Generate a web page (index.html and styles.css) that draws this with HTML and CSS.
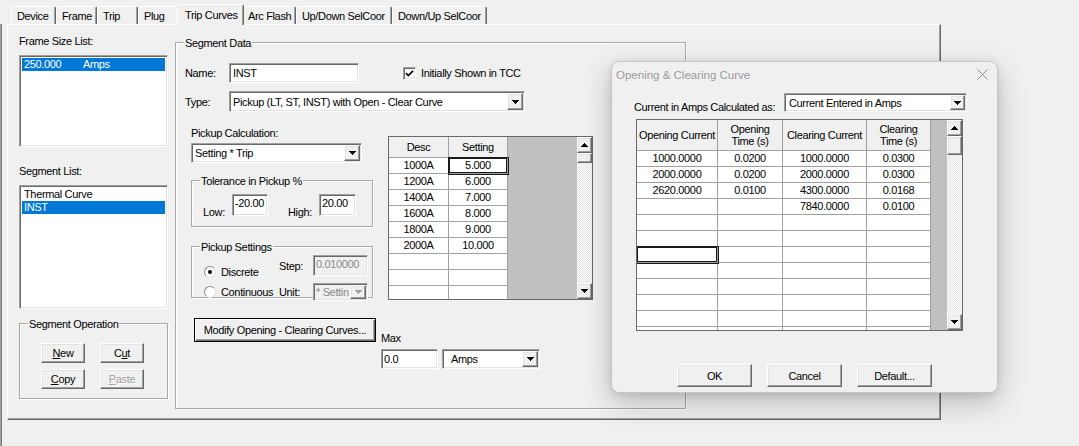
FILE: index.html
```html
<!DOCTYPE html>
<html>
<head>
<meta charset="utf-8">
<link rel="stylesheet" href="styles.css">
</head>
<body>
<div class="tabs">
  <div class="tab t-device">Device</div>
  <div class="tab t-frame">Frame</div>
  <div class="tab t-trip">Trip</div>
  <div class="tab t-plug">Plug</div>
  <div class="tab active t-curves">Trip Curves</div>
  <div class="tab t-arc">Arc Flash</div>
  <div class="tab t-ud">Up/Down SelCoor</div>
  <div class="tab t-du">Down/Up SelCoor</div>
</div>
<div class="frame">
  <div class="page">
    <div class="left-col">
      <div class="frame-lbl">Frame Size List:</div>
      <div class="sunken listbox lb1">
        <div class="li sel"><span class="amt">250.000</span><span>Amps</span></div>
      </div>
      <div class="seg-lbl">Segment List:</div>
      <div class="sunken listbox lb2">
        <div class="li">Thermal Curve</div>
        <div class="li sel">INST</div>
      </div>
      <div class="group segop">
        <span class="gtitle">Segment Operation</span>
        <div class="opgrid">
          <div class="btn"><u>N</u>ew</div>
          <div class="btn">C<u>u</u>t</div>
          <div class="btn"><u>C</u>opy</div>
          <div class="btn disabled"><u>P</u>aste</div>
        </div>
      </div>
    </div>

    <div class="group segdata">
      <span class="gtitle">Segment Data</span>
      <div class="name-row">
        <span class="flbl">Name:</span>
        <div class="sunken edit name-edit">INST</div>
        <div class="sunken chk">
          <svg width="11" height="11" viewBox="0 0 11 11"><path d="M2 5.2 L4.3 7.6 L9 2.8" fill="none" stroke="#000" stroke-width="1.7"/></svg>
        </div>
        <span class="chk-lbl">Initially Shown in TCC</span>
      </div>
      <div class="type-row">
        <span class="flbl">Type:</span>
        <div class="sunken select type-sel">
          <span class="val">Pickup (LT, ST, INST) with Open - Clear Curve</span>
          <span class="raised dd"><svg width="7" height="4" viewBox="0 0 7 4"><path d="M0 0h7v1h-1v1h-1v1h-1v1h-1v-1h-1v-1h-1v-1h-1z"/></svg></span>
        </div>
      </div>
      <div class="mid">
        <div class="pcol">
          <div class="plbl">Pickup Calculation:</div>
          <div class="sunken select calc-sel">
            <span class="val">Setting * Trip</span>
            <span class="raised dd"><svg width="7" height="4" viewBox="0 0 7 4"><path d="M0 0h7v1h-1v1h-1v1h-1v1h-1v-1h-1v-1h-1v-1h-1z"/></svg></span>
          </div>
          <div class="group tol">
            <span class="gtitle">Tolerance in Pickup %</span>
            <span class="tlbl low-lbl">Low:</span>
            <div class="sunken edit tedit low-edit">-20.00</div>
            <span class="tlbl high-lbl">High:</span>
            <div class="sunken edit tedit high-edit">20.00</div>
          </div>
          <div class="group psets">
            <span class="gtitle">Pickup Settings</span>
            <div class="pgrid">
              <div class="rcell r1"><span class="radio on"></span>Discrete</div>
              <span class="slbl">Step:</span>
              <div class="sunken edit dis step-edit">0.010000</div>
              <div class="rcell r2"><span class="radio"></span>Continuous</div>
              <span class="slbl">Unit:</span>
              <div class="sunken select dis unit-sel">
                <span class="val">* Settin</span>
                <span class="raised dd"><svg width="7" height="4" viewBox="0 0 7 4"><path fill="#a0a0a0" d="M0 0h7v1h-1v1h-1v1h-1v1h-1v-1h-1v-1h-1v-1h-1z"/></svg></span>
              </div>
            </div>
          </div>
        </div>

        <div class="dgrid ptable">
          <div class="cells pcells">
            <div class="h">Desc</div><div class="h">Setting</div>
            <div class="c">1000A</div><div class="c sel">5.000</div>
            <div class="c">1200A</div><div class="c">6.000</div>
            <div class="c">1400A</div><div class="c">7.000</div>
            <div class="c">1600A</div><div class="c">8.000</div>
            <div class="c">1800A</div><div class="c">9.000</div>
            <div class="c">2000A</div><div class="c">10.000</div>
            <div class="c"></div><div class="c"></div>
            <div class="c"></div><div class="c"></div>
            <div class="c"></div><div class="c"></div>
          </div>
          <div class="filler"></div>
          <div class="vscroll">
            <div class="raised sbb"><svg width="7" height="4" viewBox="0 0 7 4"><path d="M3 0h1v1h1v1h1v1h1v1h-7v-1h1v-1h1v-1h1z"/></svg></div>
            <div class="raised thumb"></div>
            <div class="track"></div>
            <div class="raised sbb"><svg width="7" height="4" viewBox="0 0 7 4"><path d="M0 0h7v1h-1v1h-1v1h-1v1h-1v-1h-1v-1h-1v-1h-1z"/></svg></div>
          </div>
        </div>
      </div>

      <div class="bottom">
        <div class="btn def modify">Modify Opening - Clearing Curves...</div>
        <div class="maxcol">
          <div class="maxlbl">Max</div>
          <div class="maxrow">
            <div class="sunken edit max-edit">0.0</div>
            <div class="sunken select amps-sel">
              <span class="val">Amps</span>
              <span class="raised dd"><svg width="7" height="4" viewBox="0 0 7 4"><path d="M0 0h7v1h-1v1h-1v1h-1v1h-1v-1h-1v-1h-1v-1h-1z"/></svg></span>
            </div>
          </div>
        </div>
      </div>
    </div>
  </div>
</div>

<div class="dialog">
  <div class="dlg-title">
    <span>Opening &amp; Clearing Curve</span>
    <svg class="xclose" width="11" height="11" viewBox="0 0 11 11"><path d="M0.5 0.5 L10.5 10.5 M10.5 0.5 L0.5 10.5" stroke="#8a8a8a" stroke-width="1"/></svg>
  </div>
  <div class="dlg-row">
    <span class="dlg-lbl">Current in Amps Calculated as:</span>
    <div class="sunken select dlg-sel">
      <span class="val">Current Entered in Amps</span>
      <span class="raised dd"><svg width="7" height="4" viewBox="0 0 7 4"><path d="M0 0h7v1h-1v1h-1v1h-1v1h-1v-1h-1v-1h-1v-1h-1z"/></svg></span>
    </div>
  </div>
  <div class="dgrid dtable">
    <div class="cells dcells">
      <div class="h">Opening Current</div><div class="h">Opening<br>Time (s)</div><div class="h">Clearing Current</div><div class="h">Clearing<br>Time (s)</div>
      <div class="c">1000.0000</div><div class="c">0.0200</div><div class="c">1000.0000</div><div class="c">0.0300</div>
      <div class="c">2000.0000</div><div class="c">0.0200</div><div class="c">2000.0000</div><div class="c">0.0300</div>
      <div class="c">2620.0000</div><div class="c">0.0100</div><div class="c">4300.0000</div><div class="c">0.0168</div>
      <div class="c"></div><div class="c"></div><div class="c">7840.0000</div><div class="c">0.0100</div>
      <div class="c"></div><div class="c"></div><div class="c"></div><div class="c"></div>
      <div class="c"></div><div class="c"></div><div class="c"></div><div class="c"></div>
      <div class="c sel"></div><div class="c"></div><div class="c"></div><div class="c"></div>
      <div class="c"></div><div class="c"></div><div class="c"></div><div class="c"></div>
      <div class="c"></div><div class="c"></div><div class="c"></div><div class="c"></div>
      <div class="c"></div><div class="c"></div><div class="c"></div><div class="c"></div>
      <div class="c"></div><div class="c"></div><div class="c"></div><div class="c"></div>
      <div class="c"></div><div class="c"></div><div class="c"></div><div class="c"></div>
    </div>
    <div class="filler"></div>
    <div class="vscroll">
      <div class="raised sbb"><svg width="7" height="4" viewBox="0 0 7 4"><path d="M3 0h1v1h1v1h1v1h1v1h-7v-1h1v-1h1v-1h1z"/></svg></div>
      <div class="raised thumb dthumb"></div>
      <div class="track"></div>
      <div class="raised sbb"><svg width="7" height="4" viewBox="0 0 7 4"><path d="M0 0h7v1h-1v1h-1v1h-1v1h-1v-1h-1v-1h-1v-1h-1z"/></svg></div>
    </div>
  </div>
  <div class="dlg-btns">
    <div class="btn dbtn">OK</div>
    <div class="btn dbtn">Cancel</div>
    <div class="btn dbtn">Default...</div>
  </div>
</div>
</body>
</html>
```

FILE: styles.css
```css
* { box-sizing: border-box; }

body {
  margin: 0;
  width: 1079px;
  height: 446px;
  overflow: hidden;
  position: relative;
  background: #f0f0f0;
  color: #000;
  font-family: "Liberation Sans", Arial, sans-serif;
  font-size: 11px;
  letter-spacing: -0.35px;
  line-height: 14px;
}

/* ---------- tabs ---------- */
.tabs {
  display: flex;
  align-items: flex-end;
  height: 24px;
  padding-left: 11px;
}
.tab {
  height: 18px;
  padding-left: 5px;
  display: flex;
  align-items: center;
  white-space: nowrap;
  border-top: 1px solid #fff;
  border-left: 1px solid #fff;
  border-right: 1px solid #696969;
  box-shadow: inset -1px 0 0 #a0a0a0;
  border-radius: 2px 2px 0 0;
}
.tab.active {
  height: 21px;
  margin: 0 -2px -1px;
  padding-left: 7px;
  padding-bottom: 1px;
  position: relative;
  z-index: 2;
  background: #f0f0f0;
}
.t-device { width: 45px; }
.t-frame, .t-trip, .t-plug { width: 41px; }
.t-curves { width: 67px; }
.t-arc { width: 54px; }
.t-ud { width: 96px; }
.t-du { width: 95px; }

/* ---------- frame / page ---------- */
.frame {
  height: 422px;
  border-left: 1px solid #a0a0a0;
  box-shadow: inset 1px 0 0 #7a7a7a;
}
.page {
  margin-left: 6px;
  width: 934px;
  height: 396px;
  display: flex;
  align-items: flex-start;
  padding-left: 11px;
  border-top: 1px solid #fff;
  border-left: 1px solid #fff;
  border-right: 1px solid #696969;
  border-bottom: 1px solid #696969;
  box-shadow: inset -1px -1px 0 #a0a0a0;
}

/* ---------- common widgets ---------- */
.sunken {
  border: 1px solid;
  border-color: #a0a0a0 #fff #fff #a0a0a0;
  box-shadow: inset 1px 1px 0 #696969, inset -1px -1px 0 #e3e3e3;
  background: #fff;
}
.raised {
  background: #f0f0f0;
  border: 1px solid;
  border-color: #fff #696969 #696969 #fff;
  box-shadow: inset -1px -1px 0 #a0a0a0, inset 1px 1px 0 #e3e3e3;
}
.btn {
  background: #f0f0f0;
  border: 1px solid;
  border-color: #fff #696969 #696969 #fff;
  box-shadow: inset -1px -1px 0 #a0a0a0, inset 1px 1px 0 #e3e3e3;
  display: flex;
  align-items: center;
  justify-content: center;
  white-space: nowrap;
}
.btn.disabled {
  color: #a0a0a0;
  text-shadow: 1px 1px 0 #fff;
}
.btn.def {
  border-color: #000;
  box-shadow: inset 1px 1px 0 #fff, inset -1px -1px 0 #696969, inset -2px -2px 0 #a0a0a0;
}
.group {
  position: relative;
  border: 1px solid #a8a8a8;
  box-shadow: inset 1px 1px 0 #fff, 1px 1px 0 #fff;
}
.gtitle {
  position: absolute;
  top: -7px;
  left: 8px;
  padding: 0 1px;
  background: #f0f0f0;
  white-space: nowrap;
}
.edit {
  padding-left: 3px;
  display: flex;
  align-items: center;
  white-space: nowrap;
  overflow: hidden;
}
.edit.dis, .select.dis {
  background: #f0f0f0;
  color: #8a8a8a;
}
.select {
  display: flex;
  align-items: stretch;
}
.select .val {
  flex: 1;
  padding-left: 3px;
  display: flex;
  align-items: center;
  white-space: nowrap;
  overflow: hidden;
}
.select .dd {
  width: 16px;
  margin: 1px 1px 1px 0;
  display: flex;
  align-items: center;
  justify-content: center;
  flex: none;
}
.dd svg, .sbb svg { display: block; }

/* ---------- left column ---------- */
.left-col {
  width: 149px;
  padding-top: 9px;
  flex: none;
}
.listbox {
  padding: 2px;
  width: 149px;
}
.lb1 { margin-top: 7px; height: 92px; }
.seg-lbl { margin-top: 17px; }
.lb2 { margin-top: 7px; height: 124px; }
.li {
  height: 13px;
  line-height: 13px;
  padding-left: 2px;
  white-space: nowrap;
  display: flex;
}
.li.sel {
  background: #0078d7;
  color: #fff;
}
.li .amt { width: 59px; }

.segop {
  margin-top: 14px;
  height: 76px;
  padding: 19px 0 0 21px;
}
.opgrid {
  display: grid;
  grid-template-columns: 44px 44px;
  grid-auto-rows: 20px;
  column-gap: 15px;
  row-gap: 6px;
}

/* ---------- segment data ---------- */
.segdata {
  margin: 17px 0 0 7px;
  width: 511px;
  height: 367px;
  padding: 20px 0 0 9px;
  flex: none;
}
.name-row, .type-row {
  display: flex;
  align-items: center;
}
.flbl { width: 44px; }
.name-edit { width: 130px; height: 20px; }
.chk {
  width: 13px;
  height: 13px;
  margin-left: 44px;
  padding: 0;
}
.chk svg { display: block; }
.chk-lbl { margin-left: 5px; }
.type-row { margin-top: 8px; }
.type-sel { width: 296px; height: 21px; }

.mid {
  display: flex;
  align-items: flex-start;
  margin: 14px 0 0 6px;
}
.pcol { width: 182px; flex: none; }
.calc-sel { margin-top: 3px; width: 171px; height: 20px; }
.tol {
  margin-top: 17px;
  height: 47px;
  display: flex;
  align-items: flex-end;
  padding: 14px 0 10px 11px;
}
.tlbl { margin-bottom: -3px; }
.low-lbl { width: 29px; }
.high-lbl { width: 31px; margin-left: 20px; }
.tedit {
  height: 22px;
  align-items: flex-start;
  padding-top: 1px;
  padding-left: 2px;
}
.low-edit { width: 36px; }
.high-edit { width: 37px; }

.psets {
  margin-top: 19px;
  height: 52px;
  padding: 8px 0 0 12px;
}
.pgrid {
  display: grid;
  grid-template-columns: 75px 34px 55px;
  grid-template-rows: 21px 18px;
  row-gap: 7px;
  align-items: center;
}
.rcell {
  display: flex;
  align-items: center;
  white-space: nowrap;
}
.r1 { align-self: end; margin-bottom: -3px; }
.radio {
  width: 12px;
  height: 12px;
  margin-right: 5px;
  border-radius: 50%;
  background: #fff;
  border: 1px solid;
  border-color: #8a8a8a #e3e3e3 #e3e3e3 #8a8a8a;
  position: relative;
  flex: none;
}
.radio.on::after {
  content: "";
  position: absolute;
  left: 3px;
  top: 3px;
  width: 4px;
  height: 4px;
  border-radius: 50%;
  background: #000;
}
.step-edit {
  height: 21px;
  align-items: flex-start;
  padding-top: 1px;
  padding-left: 2px;
}
.unit-sel { height: 18px; }
.unit-sel .val { padding-left: 2px; }

/* ---------- data grids ---------- */
.dgrid {
  display: flex;
  border: 1px solid #696969;
  background: #c0c0c0;
  overflow: hidden;
}
.cells {
  display: grid;
  grid-auto-rows: 16px;
  align-content: start;
  flex: none;
}
.cells .h, .cells .c {
  border-right: 1px solid #a0a0a0;
  border-bottom: 1px solid #a0a0a0;
  text-align: center;
  white-space: nowrap;
}
.cells .h {
  background: #f0f0f0;
  display: flex;
  align-items: center;
  justify-content: center;
  line-height: 12px;
}
.cells .c {
  background: #fff;
  line-height: 15px;
}
.cells .c.sel {
  position: relative;
  z-index: 1;
  box-shadow: 0 0 0 1px #1a1a1a, inset 0 0 0 1px #1a1a1a;
}
.filler { flex: 1; background: #c0c0c0; }
.vscroll {
  width: 15px;
  flex: none;
  display: flex;
  flex-direction: column;
}
.sbb {
  height: 16px;
  flex: none;
  display: flex;
  align-items: center;
  justify-content: center;
}
.thumb { height: 10px; flex: none; }
.track {
  flex: 1;
  background: repeating-conic-gradient(#fff 0% 25%, #e4e4e4 0% 50%) 0 0 / 2px 2px;
}

.ptable {
  margin: 10px 0 0 15px;
  width: 205px;
  height: 164px;
}
.pcells {
  grid-template-columns: 60px 59px;
  grid-template-rows: 21px;
}

/* ---------- bottom of segment data ---------- */
.bottom {
  display: flex;
  align-items: flex-start;
  margin: 18px 0 0 9px;
}
.modify { width: 182px; height: 24px; }
.maxcol { margin: 13px 0 0 5px; }
.maxrow { display: flex; margin-top: 4px; }
.max-edit { width: 57px; height: 20px; padding-left: 2px; }
.amps-sel { width: 98px; height: 20px; margin-left: 4px; }
.amps-sel .val { padding-left: 8px; }

/* ---------- dialog ---------- */
.dialog {
  position: absolute;
  left: 611px;
  top: 61px;
  width: 387px;
  height: 332px;
  background: #f0f0f0;
  border: 1px solid #c6c6c6;
  border-radius: 8px;
  box-shadow: 0 10px 30px rgba(0, 0, 0, 0.22), 0 2px 8px rgba(0, 0, 0, 0.10);
  z-index: 5;
}
.dlg-title {
  height: 25px;
  display: flex;
  align-items: center;
  justify-content: space-between;
  padding: 0 9px 0 4px;
  color: #9a9a9a;
  font-size: 11.5px;
  letter-spacing: 0;
}
.xclose { display: block; }
.dlg-row {
  display: flex;
  align-items: flex-end;
  margin-top: 6px;
  padding-left: 22px;
}
.dlg-lbl { width: 150px; margin-bottom: -2px; white-space: nowrap; }
.dlg-sel { width: 183px; height: 19px; }
.dlg-sel .val { padding-left: 4px; }
.dlg-sel .dd { width: 15px; }

.dtable {
  margin: 7px 0 0 24px;
  width: 327px;
  height: 212px;
}
.dcells {
  grid-template-columns: 81px 65px 84px 64px;
  grid-template-rows: 31px;
}
.dthumb { height: 19px; }

.dlg-btns {
  display: flex;
  gap: 15px;
  margin-top: 33px;
  padding-left: 65px;
}
.dbtn { width: 75px; height: 23px; }
```
